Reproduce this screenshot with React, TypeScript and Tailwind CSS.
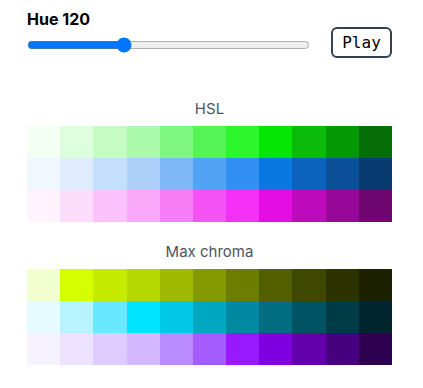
import React from "react";

const hsl: string[][] = [
  ["#f2fff2", "#ddffdd", "#c4fcc4", "#abf9ab", "#80f880", "#54f554", "#2cf72c", "#05e605", "#0bbb0b", "#049904", "#066e06"],
  ["#f1f7ff", "#dfecfd", "#c5dffb", "#acd0fa", "#80b8f7", "#52a3f5", "#3390f3", "#0a78e3", "#0d62be", "#0b4f98", "#083b6f"],
  ["#fff3fe", "#fcdcfb", "#fac1fa", "#f8a8f8", "#f77ef7", "#f552f5", "#f52ff5", "#e40ee4", "#bd0abd", "#980898", "#700670"],
];

const chroma: string[][] = [
  ["#f2ffce", "#d5ff00", "#c5eb00", "#b5d800", "#9fb800", "#859a00", "#6c7d00", "#536000", "#3e4800", "#2c3300", "#1b2000"],
  ["#e5fbff", "#b8f4ff", "#68e9ff", "#00e4ff", "#00c8e6", "#00a7c1", "#0089a0", "#006e80", "#005363", "#003b48", "#00252e"],
  ["#f6f3ff", "#ede2ff", "#decbff", "#d3b8ff", "#b98bff", "#a55cff", "#9818ff", "#7f00e0", "#6300ad", "#47007e", "#2d0050"],
];

function Palette({ title, rows }: { title: string; rows: string[][] }) {
  return (
    <div className="w-[365px]">
      <div className="text-center text-[15px] leading-5 text-[#4b5563] mb-[7px]">{title}</div>
      <div className="grid grid-cols-11">
        {rows.flatMap((row, r) =>
          row.map((c, i) => <div key={`${r}-${i}`} className="h-8" style={{ backgroundColor: c }} />)
        )}
      </div>
    </div>
  );
}

export default function App() {
  const [hue, setHue] = React.useState(120);
  return (
    <div className="pl-[27px] pt-[7px] bg-white min-h-[388px]" style={{ fontFamily: "Inter, 'Noto Sans', sans-serif" }}>
      <div className="w-[365px] flex justify-between items-start">
        <div className="flex flex-col">
          <div className="text-base leading-6 font-bold text-black">Hue {hue}</div>
          <input
            type="range"
            min={0}
            max={360}
            value={hue}
            onChange={(e) => setHue(Number(e.target.value))}
            className="w-[283px] h-4 mt-[6px] mx-0"
          />
        </div>
        <button
          className="mt-[20px] h-[31px] w-[61px] border-2 border-[#334155] rounded-md bg-white text-base leading-none text-black flex items-center justify-center"
          style={{ fontFamily: "'DejaVu Sans Mono', monospace" }}
        >
          Play
        </button>
      </div>
      <div className="mt-[41px]">
        <Palette title="HSL" rows={hsl} />
      </div>
      <div className="mt-[20px]">
        <Palette title="Max chroma" rows={chroma} />
      </div>
    </div>
  );
}
